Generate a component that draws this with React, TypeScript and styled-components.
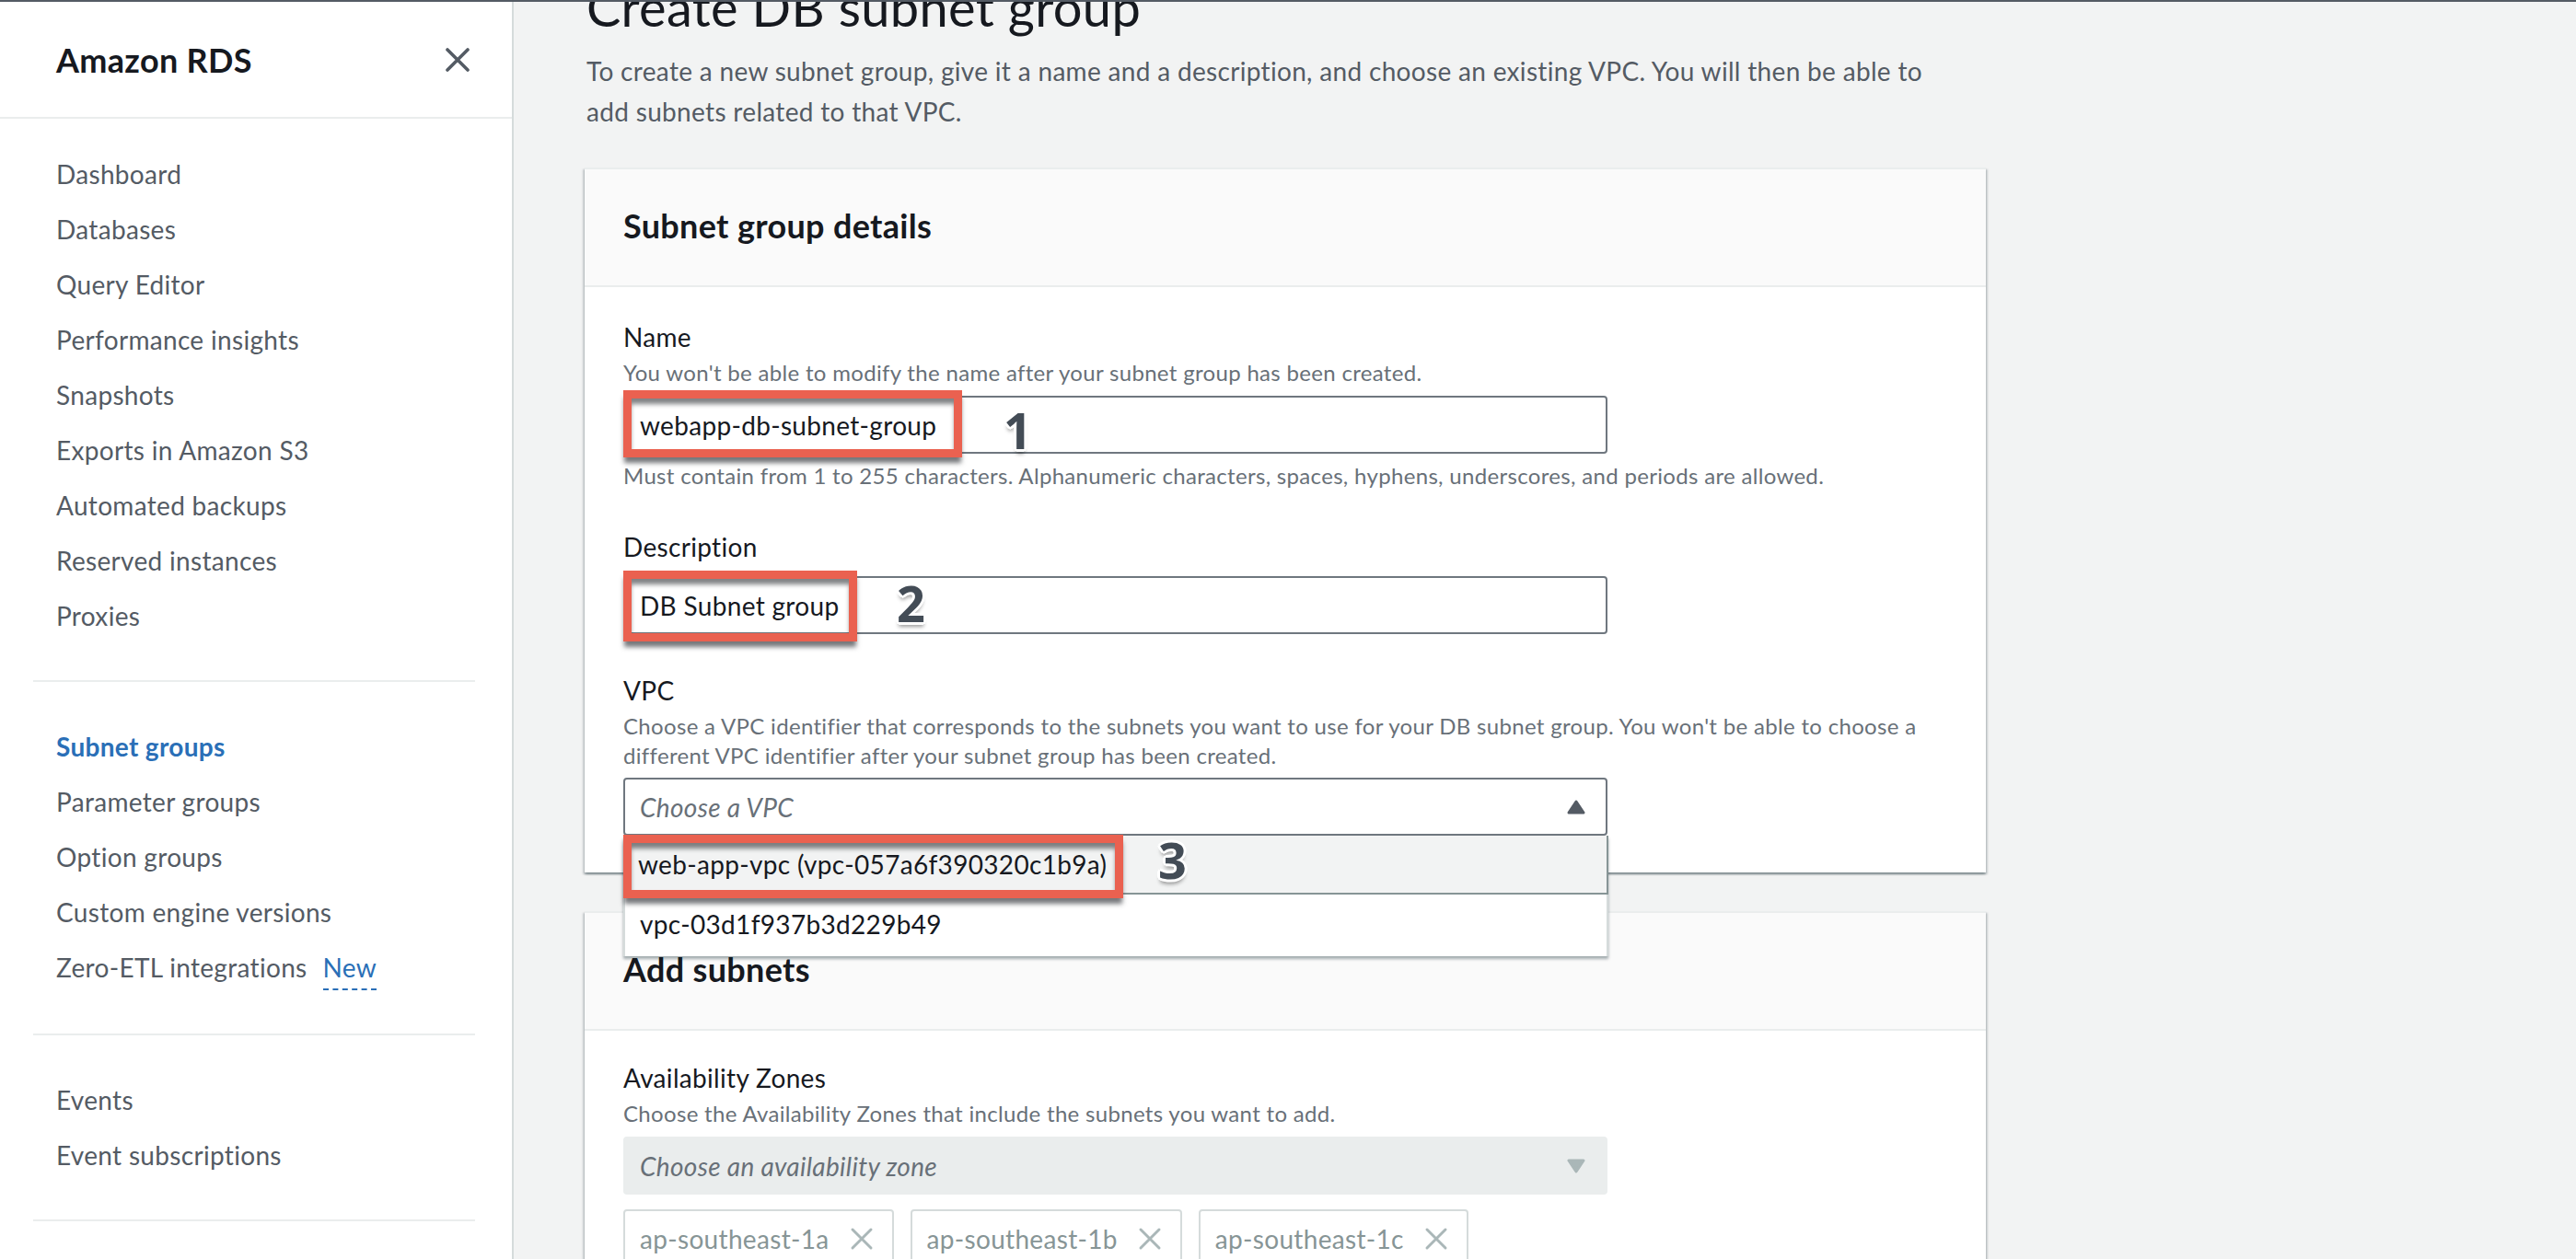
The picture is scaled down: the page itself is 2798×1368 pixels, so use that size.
import React from "react";
import styled, { createGlobalStyle } from "styled-components";

const GlobalStyle = createGlobalStyle`
  html, body { margin: 0; padding: 0; }
  body {
    font-family: Lato, "Liberation Sans", sans-serif;
    letter-spacing: 0.02em;
    background: #f2f3f3;
    overflow: hidden;
    -webkit-font-smoothing: antialiased;
  }
  * { box-sizing: border-box; }
`;

const Shell = styled.div`
  display: flex;
  height: 1368px;
  border-top: 2px solid #545b64;
  overflow: hidden;
`;

const Sidebar = styled.nav`
  width: 558px;
  flex: none;
  background: #ffffff;
  border-right: 2px solid #d5dbdb;
`;

const SideHeader = styled.div`
  height: 127px;
  display: flex;
  align-items: center;
  justify-content: space-between;
  padding: 0 45px 0 61px;
  border-bottom: 2px solid #eaeded;
`;

const SideTitle = styled.div`
  font-size: 36px;
  font-weight: 700;
  color: #16191f;
`;

const CloseButton = styled.button`
  border: 0;
  background: none;
  padding: 0;
  width: 28px;
  height: 28px;
  display: flex;
  color: #545b64;
`;

const NavSection = styled.ul<{ $top?: number; $bottom?: number }>`
  list-style: none;
  margin: 0;
  padding: ${(p) => p.$top ?? 40}px 0 ${(p) => p.$bottom ?? 40}px;
`;

const NavItem = styled.li<{ $active?: boolean }>`
  font-size: 28px;
  line-height: 60px;
  padding-left: 61px;
  color: ${(p) => (p.$active ? "#2a6fb7" : "#545b64")};
  font-weight: ${(p) => (p.$active ? 700 : 400)};
  white-space: nowrap;
`;

const NewTag = styled.span`
  display: inline-block;
  margin-left: 17px;
  color: #2a6fb7;
  line-height: 34px;
  padding-bottom: 6px;
  border-bottom: 2px dashed #2a6fb7;
`;

const Divider = styled.div`
  height: 2px;
  background: #eaeded;
  margin: 0 40px 0 36px;
`;

const Main = styled.main`
  flex: 1;
  padding-left: 77px;
  min-width: 0;
`;

const PageTitle = styled.h1`
  margin: -28px 0 0 2px;
  font-size: 56px;
  line-height: 68px;
  font-weight: 400;
  color: #16191f;
  white-space: nowrap;
`;

const PageDesc = styled.p`
  margin: 13px 0 0 2px;
  width: 1490px;
  font-size: 28px;
  line-height: 44px;
  color: #545b64;
`;

const Panel = styled.section<{ $top: number }>`
  width: 1522px;
  margin-top: ${(p) => p.$top}px;
  background: #ffffff;
  box-shadow: 0 2px 2px 0 rgba(0, 28, 36, 0.3), 2px 2px 2px 0 rgba(0, 28, 36, 0.15),
    -2px 2px 2px 0 rgba(0, 28, 36, 0.15);
  border-top: 2px solid #eaeded;
`;

const PanelHeader = styled.header`
  background: #fafafa;
  border-bottom: 2px solid #eaeded;
  padding: 37px 42px 41px;
`;

const PanelTitle = styled.h2`
  margin: 0;
  font-size: 36px;
  line-height: 48px;
  font-weight: 700;
  color: #16191f;
`;

const PanelBody = styled.div<{ $top?: number; $bottom?: number }>`
  padding: ${(p) => p.$top ?? 34}px 42px ${(p) => p.$bottom ?? 40}px;
`;

const Field = styled.div`
  & + & {
    margin-top: 41px;
  }
`;

const Label = styled.div`
  font-size: 28px;
  line-height: 40px;
  color: #16191f;
`;

const Hint = styled.div<{ $gap?: number }>`
  margin-top: ${(p) => p.$gap ?? 3}px;
  font-size: 24px;
  line-height: 32px;
  color: #687078;
`;

const ControlWrap = styled.div<{ $gap?: number }>`
  position: relative;
  width: 1069px;
  margin-top: ${(p) => p.$gap ?? 9}px;
`;

const TextInput = styled.input`
  display: block;
  width: 100%;
  height: 63px;
  border: 2px solid #6f777f;
  border-radius: 4px;
  padding: 0 16px;
  font-family: inherit;
  letter-spacing: inherit;
  font-size: 28px;
  color: #16191f;
  background: #ffffff;
  outline: none;
`;

const SelectBox = styled.div<{ $disabled?: boolean }>`
  height: 63px;
  display: flex;
  align-items: center;
  justify-content: space-between;
  padding: 0 22px 0 16px;
  border: 2px solid ${(p) => (p.$disabled ? "#eaeded" : "#6f777f")};
  border-radius: 4px;
  background: ${(p) => (p.$disabled ? "#eaeded" : "#ffffff")};
  font-size: 28px;
  font-style: italic;
  color: #687078;
`;

const Dropdown = styled.ul`
  position: absolute;
  top: 100%;
  left: 0;
  width: 1070px;
  margin: 0;
  padding: 0;
  list-style: none;
  background: #ffffff;
  border-left: 2px solid #d5dbdb;
  border-right: 2px solid #d5dbdb;
  box-shadow: 0 3px 3px rgba(0, 28, 36, 0.35);
  z-index: 5;
`;

const Option = styled.li<{ $highlighted?: boolean }>`
  display: flex;
  align-items: center;
  height: ${(p) => (p.$highlighted ? 64 : 67)}px;
  padding-left: ${(p) => (p.$highlighted ? 14 : 16)}px;
  padding-bottom: ${(p) => (p.$highlighted ? 0 : 4)}px;
  margin: 0 ${(p) => (p.$highlighted ? -2 : 0)}px;
  font-size: 28px;
  color: #16191f;
  background: ${(p) => (p.$highlighted ? "#f2f3f3" : "#ffffff")};
  border: ${(p) => (p.$highlighted ? "2px solid #879596" : "0")};
  border-top: 0;
`;

const Tokens = styled.div`
  display: flex;
  gap: 18px;
  margin-top: 16px;
`;

const Token = styled.div`
  display: flex;
  align-items: center;
  gap: 22px;
  height: 64px;
  padding: 0 20px 0 16px;
  border: 2px solid #d5dbdb;
  border-radius: 4px;
  background: #ffffff;
  font-size: 28px;
  color: #879596;
`;

const Callout = styled.div<{ $top: number; $w: number; $h: number }>`
  position: absolute;
  left: 0;
  top: ${(p) => p.$top}px;
  width: ${(p) => p.$w}px;
  height: ${(p) => p.$h}px;
  border: 9px solid #ea6150;
  box-shadow: 0 7px 5px -1px rgba(45, 48, 52, 0.65), inset 0 7px 5px -1px rgba(45, 48, 52, 0.6);
  pointer-events: none;
  z-index: 6;
`;

const StepNumber = styled.span<{ $left: number; $top: number }>`
  position: absolute;
  left: ${(p) => p.$left}px;
  top: ${(p) => p.$top}px;
  font-family: "Open Sans", "Liberation Sans", sans-serif;
  letter-spacing: 0;
  font-weight: 700;
  font-size: 54px;
  line-height: 54px;
  color: #434c56;
  text-shadow: 3px 0 0 #fff, -3px 0 0 #fff, 0 3px 0 #fff, 0 -3px 0 #fff, 2px 2px 0 #fff,
    -2px 2px 0 #fff, 2px -2px 0 #fff, -2px -2px 0 #fff, 0 5px 4px rgba(0, 0, 0, 0.4);
  z-index: 7;
`;

const CloseIcon = () => (
  <svg width="28" height="28" viewBox="0 0 28 28" fill="none">
    <path d="M3 3 L25 25 M25 3 L3 25" stroke="currentColor" strokeWidth="3.6" strokeLinecap="round" />
  </svg>
);

const Caret = ({ up, color }: { up?: boolean; color: string }) => (
  <svg width="20" height="16" viewBox="0 0 20 16">
    <path
      d={up ? "M10 2 L18 14 L2 14 Z" : "M2 2 L18 2 L10 14 Z"}
      fill={color}
      stroke={color}
      strokeWidth="3"
      strokeLinejoin="round"
    />
  </svg>
);

const TokenX = () => (
  <svg width="26" height="26" viewBox="0 0 26 26" fill="none">
    <path d="M3 3 L23 23 M23 3 L3 23" stroke="#aab7b8" strokeWidth="3" strokeLinecap="round" />
  </svg>
);

const mainNav = [
  "Dashboard",
  "Databases",
  "Query Editor",
  "Performance insights",
  "Snapshots",
  "Exports in Amazon S3",
  "Automated backups",
  "Reserved instances",
  "Proxies",
];

export default function App() {
  return (
    <>
      <GlobalStyle />
      <Shell>
        <Sidebar>
          <SideHeader>
            <SideTitle>Amazon RDS</SideTitle>
            <CloseButton aria-label="Close">
              <CloseIcon />
            </CloseButton>
          </SideHeader>
          <NavSection $top={30} $bottom={40}>
            {mainNav.map((n) => (
              <NavItem key={n}>{n}</NavItem>
            ))}
          </NavSection>
          <Divider />
          <NavSection $bottom={42}>
            <NavItem $active>Subnet groups</NavItem>
            <NavItem>Parameter groups</NavItem>
            <NavItem>Option groups</NavItem>
            <NavItem>Custom engine versions</NavItem>
            <NavItem>
              Zero-ETL integrations<NewTag>New</NewTag>
            </NavItem>
          </NavSection>
          <Divider />
          <NavSection>
            <NavItem>Events</NavItem>
            <NavItem>Event subscriptions</NavItem>
          </NavSection>
          <Divider />
        </Sidebar>

        <Main>
          <PageTitle>Create DB subnet group</PageTitle>
          <PageDesc>
            To create a new subnet group, give it a name and a description, and choose an existing VPC. You will then be
            able to add subnets related to that VPC.
          </PageDesc>

          <Panel $top={39}>
            <PanelHeader>
              <PanelTitle>Subnet group details</PanelTitle>
            </PanelHeader>
            <PanelBody>
              <Field>
                <Label>Name</Label>
                <Hint>You won't be able to modify the name after your subnet group has been created.</Hint>
                <ControlWrap>
                  <TextInput readOnly value="webapp-db-subnet-group" />
                  <Callout $top={-6} $w={368} $h={73} />
                  <StepNumber $left={413} $top={10}>1</StepNumber>
                </ControlWrap>
                <Hint $gap={8}>
                  Must contain from 1 to 255 characters. Alphanumeric characters, spaces, hyphens, underscores, and
                  periods are allowed.
                </Hint>
              </Field>
              <Field>
                <Label>Description</Label>
                <ControlWrap $gap={12}>
                  <TextInput readOnly value="DB Subnet group" />
                  <Callout $top={-6} $w={254} $h={77} />
                  <StepNumber $left={297} $top={2}>2</StepNumber>
                </ControlWrap>
              </Field>
              <Field>
                <Label>VPC</Label>
                <Hint>
                  Choose a VPC identifier that corresponds to the subnets you want to use for your DB subnet group. You
                  won't be able to choose a different VPC identifier after your subnet group has been created.
                </Hint>
                <ControlWrap $gap={8}>
                  <SelectBox>
                    <span>Choose a VPC</span>
                    <Caret up color="#545b64" />
                  </SelectBox>
                  <Dropdown>
                    <Option $highlighted>web-app-vpc (vpc-057a6f390320c1b9a)</Option>
                    <Option>vpc-03d1f937b3d229b49</Option>
                  </Dropdown>
                  <Callout $top={62} $w={543} $h={69} />
                  <StepNumber $left={581} $top={62}>3</StepNumber>
                </ControlWrap>
              </Field>
            </PanelBody>
          </Panel>

          <Panel $top={42}>
            <PanelHeader>
              <PanelTitle>Add subnets</PanelTitle>
            </PanelHeader>
            <PanelBody $top={31}>
              <Field>
                <Label>Availability Zones</Label>
                <Hint>Choose the Availability Zones that include the subnets you want to add.</Hint>
                <ControlWrap>
                  <SelectBox $disabled>
                    <span>Choose an availability zone</span>
                    <Caret color="#aab7b8" />
                  </SelectBox>
                </ControlWrap>
                <Tokens>
                  {["ap-southeast-1a", "ap-southeast-1b", "ap-southeast-1c"].map((z) => (
                    <Token key={z}>
                      <span>{z}</span>
                      <TokenX />
                    </Token>
                  ))}
                </Tokens>
              </Field>
            </PanelBody>
          </Panel>
        </Main>
      </Shell>
    </>
  );
}
